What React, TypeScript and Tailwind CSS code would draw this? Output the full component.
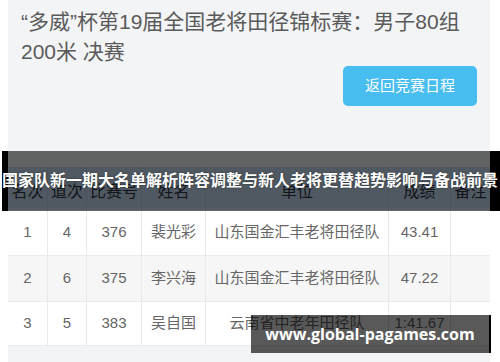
import React from "react";

const cols = [40, 39, 55, 64, 183, 62, 39];
const header = ["名次", "道次", "比赛号", "姓名", "单位", "成绩", "备注"];
const rows = [
  { cells: ["1", "4", "376", "裴光彩", "山东国金汇丰老将田径队", "43.41", ""], bg: "bg-white", h: "h-[46px]" },
  { cells: ["2", "6", "375", "李兴海", "山东国金汇丰老将田径队", "47.22", ""], bg: "bg-[#f6f6f7]", h: "h-[46px]" },
  { cells: ["3", "5", "383", "吴自国", "云南省中老年田径队", "1:41.67", ""], bg: "bg-white", h: "h-[44px]" },
];

export default function App() {
  const font = { fontFamily: '"Liberation Sans", "Noto Sans CJK SC", sans-serif' };
  return (
    <div className="relative w-[500px] h-[362px] bg-white overflow-hidden" style={font}>
      <div className="ml-[8px] w-[482px] h-[362px] bg-[#f3f4f6] flex flex-col">
        <div className="pt-[7px] px-[13px] text-[21px] leading-[30px] text-[#5a5a5a]">
          “多威”杯第19届全国老将田径锦标赛：男子80组
          <br />
          200米 决赛
        </div>
        <div className="flex justify-end pr-[13px] mt-[-1px]">
          <div className="w-[134px] h-[40px] rounded-[5px] bg-[#47bdf0] text-white text-[15px] flex items-center justify-center">
            返回竞赛日程
          </div>
        </div>
        <div className="mt-[61px] flex flex-col">
          <div className="flex h-[43px] bg-[#c9dff6] border-b-2 border-[#d4e6f8]">
            {header.map((t, i) => (
              <div
                key={i}
                style={{ width: cols[i] }}
                className="flex items-center justify-center pt-[8px] text-[16px] text-[#2e3540] border-r border-[#b9cde3] last:border-r-0"
              >
                {t}
              </div>
            ))}
          </div>
          {rows.map((r, ri) => (
            <div key={ri} className={`flex ${r.h} ${r.bg} border-b border-[#ebebeb]`}>
              {r.cells.map((t, i) => (
                <div
                  key={i}
                  style={{ width: cols[i] }}
                  className="flex items-center justify-center text-[15px] text-[#666666] border-r border-[#e9e9e9] last:border-r-0 whitespace-nowrap"
                >
                  {t}
                </div>
              ))}
            </div>
          ))}
        </div>
      </div>

      {/* title overlay band */}
      <div className="absolute left-0 top-[151px] w-[500px] h-[60px] flex">
        <div className="w-[2px] h-full" />
        <div className="w-[6px] h-full bg-black" />
        <div className="w-[482px] h-full bg-black/60" />
        <div className="w-[10px] h-full bg-black" />
      </div>
      <div
        className="absolute left-0 top-[166px] w-[500px] text-center text-white font-bold text-[16px] leading-[26px] whitespace-nowrap"
        style={{ fontFamily: '"Noto Sans CJK SC", sans-serif', textShadow: "0 0 2px rgba(0,0,0,0.5)" }}
      >
        国家队新一期大名单解析阵容调整与新人老将更替趋势影响与备战前景
      </div>

      {/* watermark */}
      <div className="absolute left-[251px] top-[315px] w-[240px] h-[38px] bg-black/65 border-r-2 border-black flex items-center justify-center">
        <span
          className="text-white font-bold text-[16px] leading-none"
          style={{ fontFamily: '"Open Sans", sans-serif' }}
        >
          www.global-pagames.com
        </span>
      </div>
    </div>
  );
}
